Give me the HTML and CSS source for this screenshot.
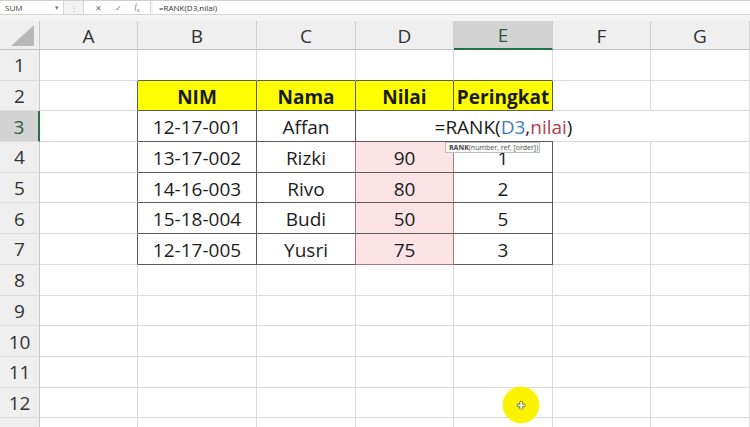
FILE: index.html
```html
<!DOCTYPE html>
<html>
<head>
<meta charset="utf-8">
<link rel="stylesheet" href="styles.css">
</head>
<body>
<div class="app">
  <div class="fbar">
    <div class="namebox"><span>SUM</span><span class="caret">▾</span></div>
    <div class="grip">⋮</div>
    <div class="fbtns"><span class="ico">✕</span><span class="ico">✓</span><span class="ico fx">f<sub>x</sub></span></div>
    <div class="finput">=RANK(D3,nilai)</div>
  </div>
  <div class="strip"></div>
  <div class="sheet">
    <div class="row hdr">
      <div class="corner"><svg width="26" height="22" viewBox="0 0 26 22"><polygon points="24,0 24,21 1,21" fill="#b8b8b8"/></svg></div>
      <div class="ch">A</div><div class="ch">B</div><div class="ch">C</div><div class="ch">D</div><div class="ch sel">E</div><div class="ch">F</div><div class="ch">G</div>
    </div>
    <div class="row">
      <div class="rh">1</div><div class="c"></div><div class="c ta"></div><div class="c ta"></div><div class="c ta"></div><div class="c ta"></div><div class="c"></div><div class="c"></div>
    </div>
    <div class="row">
      <div class="rh">2</div><div class="c tl"></div><div class="c t y">NIM</div><div class="c t y">Nama</div><div class="c t y">Nilai</div><div class="c t y">Peringkat</div><div class="c"></div><div class="c"></div>
    </div>
    <div class="row">
      <div class="rh sel">3</div><div class="c tl"></div><div class="c t">12-17-001</div><div class="c t">Affan</div><div class="c t"></div>
      <div class="c t edit">
        <div class="editbox">=RANK(<span class="ref1">D3</span>,<span class="ref2">nilai</span>)</div>
        <div class="tip"><b>RANK</b>(number, ref, [order])</div>
      </div>
      <div class="c"></div><div class="c"></div>
    </div>
    <div class="row">
      <div class="rh">4</div><div class="c tl"></div><div class="c t">13-17-002</div><div class="c t rl">Rizki</div><div class="c t p">90</div><div class="c t">1</div><div class="c"></div><div class="c"></div>
    </div>
    <div class="row">
      <div class="rh">5</div><div class="c tl"></div><div class="c t">14-16-003</div><div class="c t rl">Rivo</div><div class="c t p">80</div><div class="c t">2</div><div class="c"></div><div class="c"></div>
    </div>
    <div class="row">
      <div class="rh">6</div><div class="c tl"></div><div class="c t">15-18-004</div><div class="c t rl">Budi</div><div class="c t p">50</div><div class="c t">5</div><div class="c"></div><div class="c"></div>
    </div>
    <div class="row">
      <div class="rh">7</div><div class="c tl"></div><div class="c t">12-17-005</div><div class="c t rl">Yusri</div><div class="c t p pb">75</div><div class="c t">3</div><div class="c"></div><div class="c"></div>
    </div>
    <div class="row">
      <div class="rh">8</div><div class="c"></div><div class="c"></div><div class="c"></div><div class="c"></div><div class="c"></div><div class="c"></div><div class="c"></div>
    </div>
    <div class="row">
      <div class="rh">9</div><div class="c"></div><div class="c"></div><div class="c"></div><div class="c"></div><div class="c"></div><div class="c"></div><div class="c"></div>
    </div>
    <div class="row">
      <div class="rh">10</div><div class="c"></div><div class="c"></div><div class="c"></div><div class="c"></div><div class="c"></div><div class="c"></div><div class="c"></div>
    </div>
    <div class="row">
      <div class="rh">11</div><div class="c"></div><div class="c"></div><div class="c"></div><div class="c"></div><div class="c"></div><div class="c"></div><div class="c"></div>
    </div>
    <div class="row">
      <div class="rh">12</div><div class="c"></div><div class="c"></div><div class="c"></div><div class="c"></div><div class="c"></div><div class="c"></div><div class="c"></div>
    </div>
    <div class="row">
      <div class="rh"></div><div class="c"></div><div class="c"></div><div class="c"></div><div class="c"></div><div class="c"></div><div class="c"></div><div class="c"></div>
    </div>
  </div>
  <div class="cursor"><span class="plus">✚</span></div>
</div>
</body>
</html>
```

FILE: styles.css
```css
* { box-sizing: border-box; }
html, body { margin: 0; padding: 0; background: #fff; }
body { font-family: "Open Sans", "Noto Sans", sans-serif; color: #1a1a1a; }
.app { position: relative; width: 750px; height: 427px; overflow: hidden; }

.fbar { height: 15px; display: flex; align-items: stretch; background: #f3f3f3; border-top: 1px solid #cfcfcf; border-bottom: 1px solid #d6d6d6; font-size: 8px; color: #444; }
.namebox { width: 64px; background: #fff; border-right: 1px solid #d6d6d6; display: flex; align-items: center; justify-content: space-between; padding: 0 4px 0 5px; }
.caret { font-size: 7px; color: #777; }
.grip { width: 19px; display: flex; align-items: center; justify-content: center; color: #b5b5b5; font-size: 8px; }
.fbtns { width: 68px; background: #fff; border-left: 1px solid #d6d6d6; border-right: 1px solid #d6d6d6; display: flex; align-items: center; justify-content: space-around; padding: 0 4px; color: #777; }
.ico { font-size: 8px; }
.fx { font-family: "Liberation Serif", serif; font-style: italic; font-size: 8px; }
.fx sub { font-size: 6px; }
.finput { flex: 1; background: #fff; margin-left: 2px; display: flex; align-items: center; padding-left: 6px; color: #333; }

.strip { height: 6px; background: #f4f4f4; }

.sheet { display: flex; flex-direction: column; }
.row { display: grid; grid-template-columns: 40px 98px 119px 99px 98px 99px 98px 99px; height: 30.7px; }
.row.hdr { height: 29px; background: #efefef; }

.corner { border-right: 1px solid #c9c9c9; border-bottom: 1px solid #c2c2c2; display: flex; align-items: flex-end; justify-content: flex-end; padding: 0 3px 2px 0; }
.ch { border-right: 1px solid #cfcfcf; border-bottom: 1px solid #c2c2c2; display: flex; align-items: center; justify-content: center; font-size: 19px; color: #333; padding-top: 1px; }
.ch.sel { background: #d3d3d3; border-bottom: 2px solid #217346; color: #2f5a3f; }

.rh { background: #efefef; border-right: 1px solid #c6c6c6; border-bottom: 1px solid #dcdcdc; display: flex; align-items: center; justify-content: center; font-size: 19px; color: #333; padding-top: 1px; }
.rh.sel { background: #d3d3d3; border-right: 2px solid #217346; color: #2f5a3f; }

.c { border-right: 1px solid #dadada; border-bottom: 1px solid #dadada; display: flex; align-items: center; justify-content: center; font-size: 19px; color: #1c1c1c; padding-top: 2px; white-space: nowrap; }
.ta { border-bottom-color: #5c5c5c; }
.tl { border-right-color: #5c5c5c; }
.t { border-right-color: #5c5c5c; border-bottom-color: #5c5c5c; }
.y { background: #ffff00; font-weight: 700; color: #1a1a1a; }
.p { background: #fbe3e6; border-right-color: #b27480; }
.pb { border-bottom-color: #b27480; }
.rl { border-right-color: #b27480; }

.edit { position: relative; }
.editbox { position: absolute; left: -98px; top: 0; width: 295px; height: 30px; background: #fff; display: flex; align-items: center; justify-content: center; font-size: 19px; color: #1a1a1a; padding-top: 1px; z-index: 2; }
.ref1 { color: #3d7cc4; }
.ref2 { color: #b8394e; }
.tip { position: absolute; left: -9px; top: 31px; width: 95px; height: 11px; background: #f8f8f8; border: 1px solid #bdbdbd; font-size: 7px; line-height: 9px; color: #555; padding-left: 3px; z-index: 3; font-weight: 400; }
.tip b { font-weight: 700; color: #444; }

.cursor { position: absolute; left: 503px; top: 387px; width: 36px; height: 36px; border-radius: 50%; background: #fbf200; box-shadow: 0 0 2px #fbf200; display: flex; align-items: center; justify-content: center; z-index: 5; }
.plus { font-size: 10px; color: #fff; text-shadow: 0 0 1px #000, 0 0 1px #000, 0 0 1px #000; line-height: 1; }
```
